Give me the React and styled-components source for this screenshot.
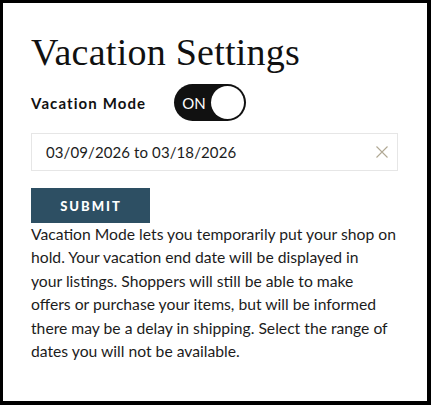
import React, { useState } from "react";
import styled, { createGlobalStyle } from "styled-components";

const Global = createGlobalStyle`
  html, body { margin: 0; padding: 0; background: #fff; }
  * { box-sizing: border-box; }
`;

const Frame = styled.div`
  width: 431px;
  height: 405px;
  border-style: solid;
  border-color: #000;
  border-width: 3px 4px 4px 3px;
  background: #fff;
  padding: 28px 29px 0 28px;
  font-family: Lato, "Open Sans", sans-serif;
  color: #1c1c1c;
`;

const Title = styled.h1`
  margin: 0;
  font-family: "Liberation Serif", "Times New Roman", serif;
  font-weight: 400;
  font-size: 38px;
  line-height: 42px;
  color: #111;
  letter-spacing: 0.25px;
`;

const ModeRow = styled.div`
  display: flex;
  align-items: center;
  gap: 28px;
  margin-top: 11px;
`;

const Label = styled.span`
  font-weight: 700;
  font-size: 15px;
  letter-spacing: 1.1px;
  color: #111;
`;

const Toggle = styled.button`
  position: relative;
  width: 72px;
  height: 37px;
  margin: 0;
  border-radius: 19px;
  border: none;
  background: #111;
  padding: 0 0 0 8px;
  display: flex;
  align-items: center;
  cursor: pointer;
  font-family: Lato, sans-serif;
  font-size: 15px;
  color: #fff;
`;

const Knob = styled.span`
  position: absolute;
  right: 2px;
  top: 2px;
  width: 33px;
  height: 33px;
  border-radius: 50%;
  background: #fff;
`;

const DateField = styled.div`
  margin-top: 12px;
  height: 38px;
  border: 1px solid #e6e6e6;
  display: flex;
  align-items: center;
  justify-content: space-between;
  padding: 0 8px 0 14px;
  font-size: 15px;
  letter-spacing: 0.1px;
  color: #1c1c1c;
`;

const Clear = styled.span`
  display: flex;
  width: 14px;
  height: 14px;
  align-items: center;
  justify-content: center;
`;

const Submit = styled.button`
  margin: 17px 0 0;
  width: 119px;
  height: 35px;
  border: none;
  background: #2d4f63;
  color: #fff;
  font-family: Lato, sans-serif;
  font-weight: 900;
  font-size: 13px;
  letter-spacing: 2px;
  display: block;
  padding: 0 0 0 1px;
`;

const Para = styled.p`
  margin: 0;
  font-size: 15.7px;
  line-height: 23.4px;
  white-space: nowrap;
  color: #1c1c1c;
`;

const lines = [
  "Vacation Mode lets you temporarily put your shop on",
  "hold. Your vacation end date will be displayed in",
  "your listings. Shoppers will still be able to make",
  "offers or purchase your items, but will be informed",
  "there may be a delay in shipping. Select the range of",
  "dates you will not be available.",
];

export default function App() {
  const [on, setOn] = useState(true);
  return (
    <>
      <Global />
      <Frame>
        <Title>Vacation Settings</Title>
        <ModeRow>
          <Label>Vacation Mode</Label>
          <Toggle onClick={() => setOn(!on)}>
            {on ? "ON" : "OFF"}
            <Knob />
          </Toggle>
        </ModeRow>
        <DateField>
          <span>03/09/2026 to 03/18/2026</span>
          <Clear>
            <svg width="12" height="12" viewBox="0 0 12 12">
              <path d="M0.5 0.5L11.5 11.5M11.5 0.5L0.5 11.5" stroke="#b0a894" strokeWidth="1.1" />
            </svg>
          </Clear>
        </DateField>
        <Submit>SUBMIT</Submit>
        <Para>
          {lines.map((l, i) => (
            <React.Fragment key={i}>
              {l}
              {i < lines.length - 1 && <br />}
            </React.Fragment>
          ))}
        </Para>
      </Frame>
    </>
  );
}
